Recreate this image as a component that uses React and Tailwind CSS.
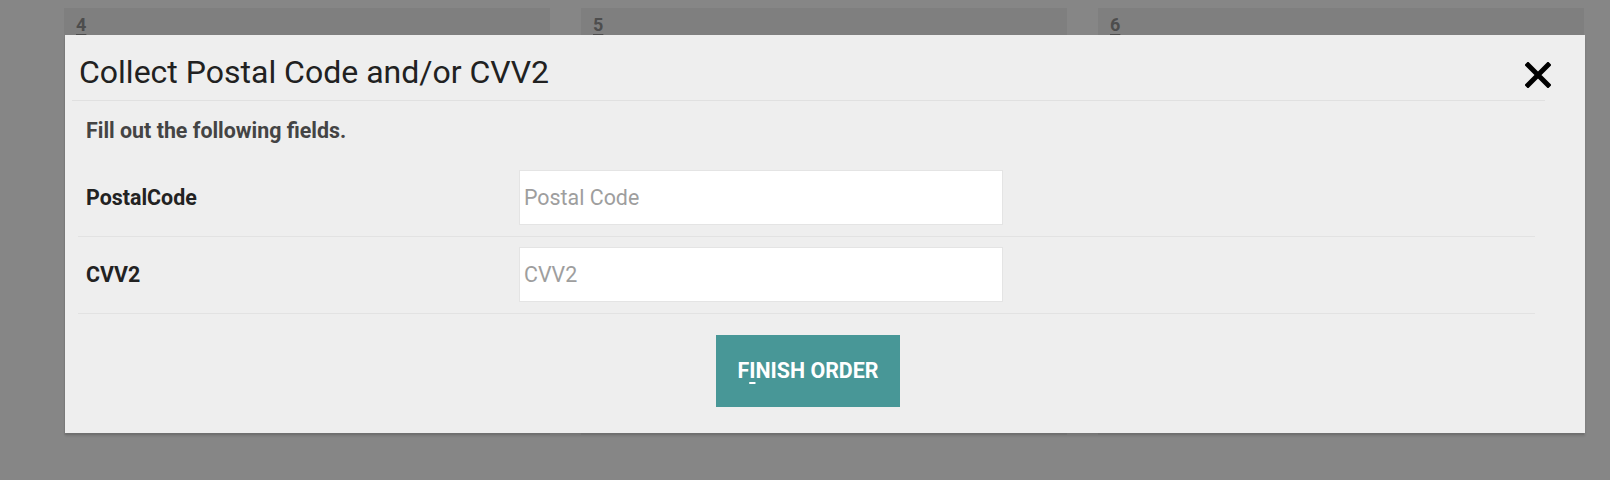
import React from "react";

function Card({ n }) {
  return (
    <div className="w-[486px] h-[427px] bg-[#7f7f7f] pl-[12px] pt-[5px]">
      <span className="text-[18px] font-bold text-[#4d4d4d] underline underline-offset-[3px] decoration-2 leading-[24px]">
        {n}
      </span>
    </div>
  );
}

function Row({ label, placeholder }) {
  return (
    <div className="flex items-center border-b border-[#e2e2e2] pt-[10px] pb-[11px]">
      <div className="w-[441px] pl-[8px] text-[21.4px] leading-[31px] font-bold text-[#222222]">
        {label}
      </div>
      <input
        className="w-[484px] h-[55px] bg-white border border-[#e4e4e4] pl-[4px] text-[21.4px] text-[#333] placeholder:text-[#9e9e9e] outline-none font-['Roboto']"
        placeholder={placeholder}
      />
    </div>
  );
}

export default function App() {
  return (
    <div className="relative w-[1610px] h-[480px] bg-[#868686] overflow-hidden font-['Roboto',sans-serif]">
      <div className="flex gap-[31px] pl-[64px] pt-[8px]">
        <Card n="4" />
        <Card n="5" />
        <Card n="6" />
      </div>

      <div className="absolute left-[65px] top-[35px] w-[1520px] h-[398px] bg-[#eeeeee] shadow-[0_3px_2px_rgba(0,0,0,0.12)]">
        <div className="ml-[7px] mr-[40px] border-b border-[#e0e0e0] pt-[18px] pb-[9px] pl-[7px]">
          <h1 className="text-[32px] leading-[38px] font-normal text-[#212121]">
            Collect Postal Code and/or CVV2
          </h1>
        </div>
        <button className="absolute left-[1460px] top-[27px] w-[26px] h-[26px]" aria-label="Close">
          <svg viewBox="0 0 26 26" width="26" height="26">
            <path d="M3 3 L23 23 M23 3 L3 23" stroke="#000" strokeWidth="5" strokeLinecap="square" fill="none" />
          </svg>
        </button>

        <div className="ml-[13px] mr-[50px]">
          <p className="mt-[14px] pl-[8px] text-[21.4px] leading-[31px] font-bold text-[#444444]">
            Fill out the following fields.
          </p>
          <div className="mt-[14px]">
            <Row label="PostalCode" placeholder="Postal Code" />
            <Row label="CVV2" placeholder="CVV2" />
          </div>
          <div className="flex justify-center mt-[21px] pl-[3px]">
            <button className="w-[184px] h-[72px] bg-[#489797] text-white text-[21.4px] font-bold leading-none">
              F<span className="underline underline-offset-[4px] decoration-2">I</span>NISH ORDER
            </button>
          </div>
        </div>
      </div>
    </div>
  );
}
